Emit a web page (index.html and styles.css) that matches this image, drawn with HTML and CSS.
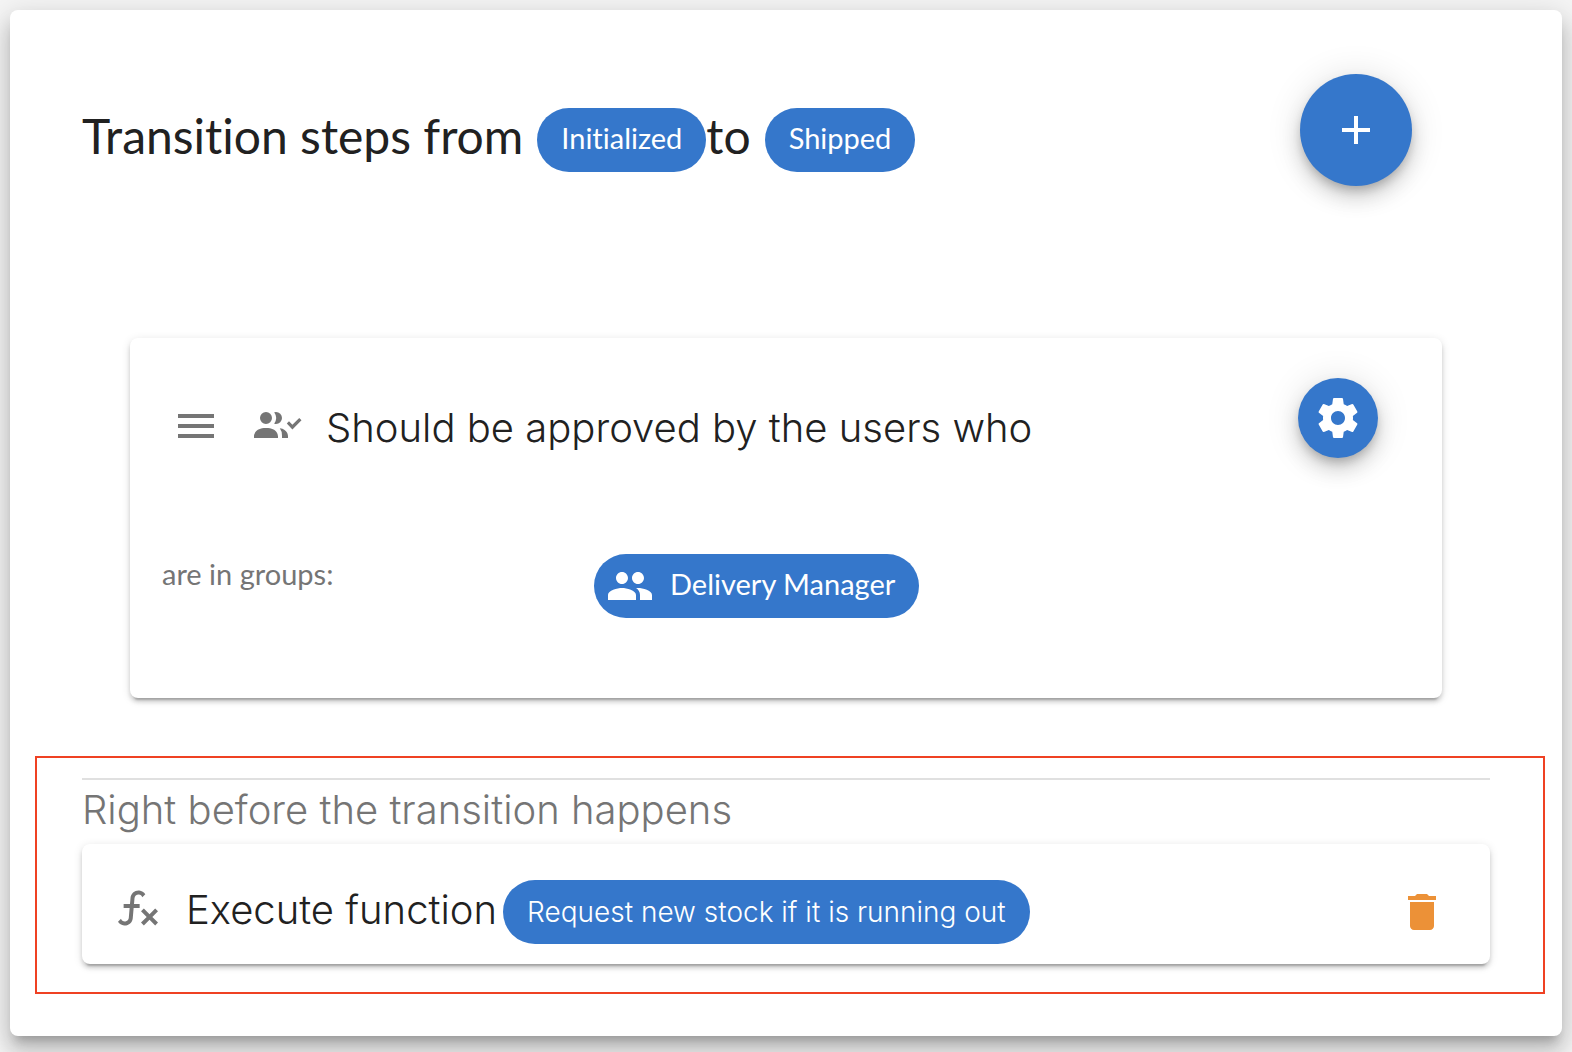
FILE: index.html
```html
<!DOCTYPE html>
<html lang="en">
<head>
<meta charset="utf-8">
<meta name="viewport" content="width=device-width, initial-scale=1">
<title>Transition steps</title>
<link rel="stylesheet" href="styles.css">
</head>
<body>
<main class="dialog">
  <header class="header">
    <h1 class="title">
      <span class="title-text">Transition steps from</span>
      <span class="chip chip-state">Initialized</span>
      <span class="title-text">to</span>
      <span class="chip chip-state">Shipped</span>
    </h1>
    <button class="fab" type="button" aria-label="Add step">
      <svg class="icon" viewBox="0 0 24 24"><path d="M19 13h-6v6h-2v-6H5v-2h6V5h2v6h6v2z"/></svg>
    </button>
  </header>

  <section class="card approval">
    <div class="approval-head">
      <svg class="icon icon-muted" viewBox="0 0 24 24"><path d="M3 18h18v-2H3v2zm0-5h18v-2H3v2zm0-7v2h18V6H3z"/></svg>
      <svg class="icon icon-muted icon-approve" viewBox="0 0 24 24"><path d="M9 8a3 3 0 1 1-6 0 3 3 0 0 1 6 0zM12 17v1H0v-1s0-4 6-4 6 4 6 4zM11 5a2.9 2.9 0 0 0-.9.14 5 5 0 0 1 0 5.72A2.9 2.9 0 0 0 11 11a3 3 0 0 0 0-6zM12.9 13.1A5.6 5.6 0 0 1 14 17v1h3v-1s0-3.4-4.1-3.9zM16.4 10.7l1.1-1.05 1.7 1.75L22.6 8l1.15 1.1-4.55 4.65z"/></svg>
      <h2 class="step-title">Should be approved by the users who</h2>
      <button class="fab fab-small" type="button" aria-label="Step settings">
        <svg class="icon" viewBox="0 0 24 24"><path d="M19.43 12.98c.04-.32.07-.64.07-.98s-.03-.66-.07-.98l2.11-1.65c.19-.15.24-.42.12-.64l-2-3.46c-.12-.22-.39-.3-.61-.22l-2.49 1c-.52-.4-1.08-.73-1.69-.98l-.38-2.65C14.46 2.18 14.25 2 14 2h-4c-.25 0-.46.18-.49.42l-.38 2.65c-.61.25-1.17.59-1.69.98l-2.49-1c-.23-.09-.49 0-.61.22l-2 3.46c-.13.22-.07.49.12.64l2.11 1.65c-.04.32-.07.65-.07.98s.03.66.07.98l-2.11 1.65c-.19.15-.24.42-.12.64l2 3.46c.12.22.39.3.61.22l2.49-1c.52.4 1.08.73 1.69.98l.38 2.65c.03.24.24.42.49.42h4c.25 0 .46-.18.49-.42l.38-2.65c.61-.25 1.17-.59 1.69-.98l2.49 1c.23.09.49 0 .61-.22l2-3.46c.12-.22.07-.49-.12-.64l-2.11-1.65zM12 15.5c-1.93 0-3.5-1.57-3.5-3.5s1.57-3.5 3.5-3.5 3.5 1.57 3.5 3.5-1.57 3.5-3.5 3.5z"/></svg>
      </button>
    </div>
    <div class="approval-groups">
      <p class="groups-label">are in groups:</p>
      <div>
        <span class="chip chip-icon">
          <svg class="icon" viewBox="0 0 24 24"><path d="M16 11c1.66 0 2.99-1.34 2.99-3S17.66 5 16 5c-1.66 0-3 1.34-3 3s1.34 3 3 3zm-8 0c1.66 0 2.99-1.34 2.99-3S9.66 5 8 5C6.34 5 5 6.34 5 8s1.34 3 3 3zm0 2c-2.33 0-7 1.17-7 3.5V19h14v-2.5c0-2.33-4.67-3.5-7-3.5zm8 0c-.29 0-.62.02-.97.05 1.16.84 1.97 1.97 1.97 3.45V19h6v-2.5c0-2.33-4.67-3.5-7-3.5z"/></svg>
          <span>Delivery Manager</span>
        </span>
      </div>
    </div>
  </section>

  <section class="highlight">
    <h2 class="section-title">Right before the transition happens</h2>
    <div class="card function-card">
      <svg class="icon icon-muted" viewBox="0 0 24 24"><path d="M12.42 5.29C11.32 5.19 10.35 6 10.25 7.11L10 10h2.82v2h-3l-.44 5.07C9.18 19.27 7.24 20.9 5.04 20.7 3.79 20.59 2.66 19.9 2 18.83l1.5-1.5c.33 1.05 1.46 1.64 2.5 1.3.78-.24 1.33-.93 1.4-1.74L7.82 12h-3v-2H8l.27-3.07c.19-2.2 2.12-3.83 4.33-3.65 1.26.11 2.4.81 3.06 1.89l-1.5 1.5c-.25-.77-.93-1.31-1.74-1.38M22 13.65l-1.41-1.41-2.83 2.83-2.83-2.83-1.43 1.41 2.85 2.85-2.85 2.81 1.43 1.41 2.83-2.83 2.83 2.83L22 19.31l-2.83-2.81z"/></svg>
      <h3 class="function-title">Execute function</h3>
      <span class="chip chip-function">Request new stock if it is running out</span>
      <button class="icon-button" type="button" aria-label="Delete function">
        <svg class="icon" viewBox="0 0 24 24"><path d="M6 19c0 1.1.9 2 2 2h8c1.1 0 2-.9 2-2V7H6v12zM19 4h-3.5l-1-1h-5l-1 1H5v2h14V4z"/></svg>
      </button>
    </div>
  </section>
</main>
</body>
</html>
```
FILE: styles.css
```css
:root {
  --blue: #3577cb;
  --orange: #ec9137;
  --ink: #212121;
  --muted: #757575;
  --rounded: Lato, "Open Sans", sans-serif;
  --plain: Inter, "Liberation Sans", sans-serif;
}

* { box-sizing: border-box; }

body {
  margin: 0;
  padding: 10px 10px 16px;
  background: #f5f5f5;
  color: var(--ink);
  font-family: var(--rounded);
  font-variant-ligatures: none;
}

h1, h2, h3, p { margin: 0; font-weight: 300; }

.dialog {
  min-height: calc(100vh - 26px);
  padding-bottom: 42px;
  border-radius: 8px;
  background: #fff;
  box-shadow: 0 10px 10px -6px rgba(0, 0, 0, .2), 0 16px 20px 2px rgba(0, 0, 0, .14), 0 6px 28px 4px rgba(0, 0, 0, .12);
}

.icon { display: block; flex: none; width: 48px; height: 48px; fill: currentColor; }
.icon-muted { color: var(--muted); }

.header {
  display: flex;
  justify-content: space-between;
  padding: 64px 150px 0 72px;
}

.title {
  display: flex;
  padding-top: 34px;
  font-size: 48px;
  font-weight: 400;
  line-height: 56px;
  white-space: nowrap;
}

.chip {
  display: inline-flex;
  align-items: center;
  height: 64px;
  padding: 0 24px 4px;
  border-radius: 32px;
  background: var(--blue);
  color: #fff;
  font-family: var(--rounded);
  font-size: 29px;
  font-weight: 400;
  line-height: 36px;
  white-space: nowrap;
}

.chip-state { margin-left: 14px; }

.fab {
  display: flex;
  flex: none;
  align-items: center;
  justify-content: center;
  width: 112px;
  height: 112px;
  padding: 0;
  border: 0;
  border-radius: 50%;
  background: var(--blue);
  color: #fff;
  box-shadow: 0 6px 10px -2px rgba(0, 0, 0, .2), 0 12px 20px 0 rgba(0, 0, 0, .14), 0 2px 36px 0 rgba(0, 0, 0, .12);
}

.fab-small { width: 80px; height: 80px; margin-left: auto; }

.card {
  border-radius: 8px;
  background: #fff;
  box-shadow: 0 6px 2px -4px rgba(0, 0, 0, .2), 0 4px 4px 0 rgba(0, 0, 0, .14), 0 2px 10px 0 rgba(0, 0, 0, .12);
}

.approval {
  margin: 152px 120px 0;
  padding: 40px 0 80px 32px;
}

.approval-head { display: flex; align-items: flex-start; padding: 0 64px 0 10px; }
.approval-head > .icon { margin-top: 24px; }
.icon-approve { margin-left: 34px; }

.step-title {
  margin-left: 24px;
  padding-top: 24px;
  font-family: var(--plain);
  font-size: 40px;
  line-height: 52px;
}

.approval-groups {
  display: grid;
  grid-template-columns: 1fr 2fr;
  gap: 8px;
  padding-top: 96px;
}

.groups-label {
  color: var(--muted);
  font-size: 29px;
  font-weight: 400;
  line-height: 40px;
}

.chip-icon { padding-left: 12px; }
.chip-icon .icon { margin: 4px 16px 0 0; }

.highlight {
  margin: 58px 17px 0 25px;
  padding: 20px 53px 28px 45px;
  border: 2px solid #ef4123;
}

.section-title {
  padding: 4px 0 8px;
  border-top: 2px solid #e0e0e0;
  color: var(--muted);
  font-family: var(--plain);
  font-size: 40px;
  line-height: 52px;
}

.function-card {
  display: flex;
  align-items: flex-start;
  padding: 36px 44px 20px 32px;
}

.function-card > .icon { margin-top: 4px; }

.function-title {
  margin: 0 6px 0 24px;
  padding-top: 4px;
  font-family: var(--plain);
  font-size: 40px;
  line-height: 52px;
}

.chip-function { padding-bottom: 0; font-family: var(--plain); font-size: 28px; font-weight: 300; }

.icon-button {
  margin: 8px 0 0 auto;
  padding: 0;
  border: 0;
  background: none;
  color: var(--orange);
}
```
